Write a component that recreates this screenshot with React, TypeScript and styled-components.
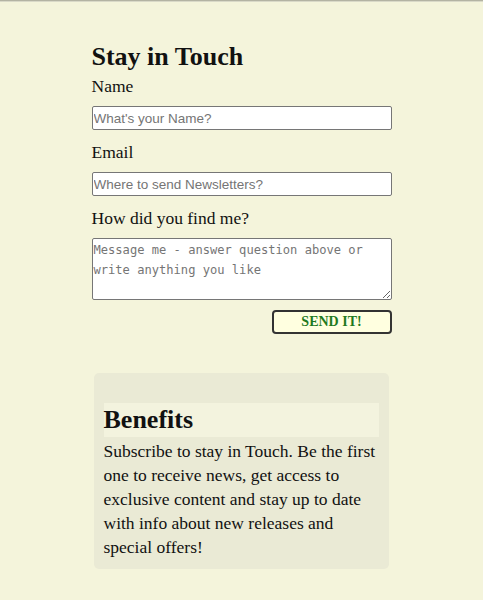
import React from "react";
import styled, { createGlobalStyle } from "styled-components";

const Global = createGlobalStyle`
  html, body { margin: 0; padding: 0; background: #f4f4db; }
  body {
    border-top: 1px solid #b3b3a3;
    box-shadow: inset 0 1px 0 #d9d9c8;
    font-family: "Liberation Serif", "DejaVu Serif", serif;
    color: #111;
    min-height: 600px;
    box-sizing: border-box;
  }
`;

const Page = styled.main`
  width: 300px;
  margin: 0 auto;
  padding-top: 38px;
  padding-bottom: 30px;
`;

const Title = styled.h1`
  margin: 0;
  font-size: 26px;
  font-weight: 700;
  line-height: 36px;
`;

const Form = styled.form`
  display: flex;
  flex-direction: column;
`;

const Label = styled.label<{ $first?: boolean }>`
  font-size: 17.5px;
  line-height: 22px;
  margin-top: ${(p) => (p.$first ? "0" : "11px")};
  margin-bottom: 9px;
`;

const Input = styled.input`
  box-sizing: border-box;
  width: 300px;
  height: 24px;
  margin: 0;
  padding: 0 1px;
  border: 1px solid #767676;
  border-radius: 2px;
  background: #fff;
  font-family: "Liberation Sans", Arial, sans-serif;
  font-size: 13.5px;
  &::placeholder { color: #757575; }
`;

const TextArea = styled.textarea`
  box-sizing: border-box;
  width: 300px;
  height: 62px;
  margin: 0;
  padding: 1px;
  border: 1px solid #767676;
  border-radius: 2px;
  background: #fff;
  font-family: "DejaVu Sans Mono", "Liberation Mono", monospace;
  font-size: 12.1px;
  line-height: 20px;
  resize: vertical;
  &::placeholder { color: #757575; }
`;

const Actions = styled.div`
  display: flex;
  justify-content: flex-end;
  margin-top: 10px;
`;

const SendButton = styled.button`
  box-sizing: border-box;
  width: 120px;
  height: 24px;
  border: 2px solid #333;
  border-radius: 4px;
  background: #ffffe0;
  color: #1f7a1f;
  font-family: "Liberation Serif", serif;
  font-weight: 700;
  font-size: 14px;
  padding: 0;
  cursor: pointer;
`;

const Benefits = styled.section`
  margin: 39px 3px 0 2px;
  padding: 30px 10px 10px;
  background: #eaead5;
  border-radius: 5px;
`;

const BenefitsTitle = styled.h2`
  margin: 0;
  background: #f3f3de;
  font-size: 26px;
  font-weight: 700;
  line-height: 34px;
`;

const BenefitsText = styled.p`
  margin: 2px 0 0;
  font-size: 17.5px;
  line-height: 24px;
`;

export default function App() {
  return (
    <>
      <Global />
      <Page>
        <Title>Stay in Touch</Title>
        <Form onSubmit={(e) => e.preventDefault()}>
          <Label $first htmlFor="name">Name</Label>
          <Input id="name" type="text" placeholder="What's your Name?" />
          <Label htmlFor="email">Email</Label>
          <Input id="email" type="email" placeholder="Where to send Newsletters?" />
          <Label htmlFor="msg">How did you find me?</Label>
          <TextArea id="msg" placeholder="Message me - answer question above or write anything you like" />
          <Actions>
            <SendButton type="submit">SEND IT!</SendButton>
          </Actions>
        </Form>
        <Benefits>
          <BenefitsTitle>Benefits</BenefitsTitle>
          <BenefitsText>
            Subscribe to stay in Touch. Be the first one to receive news, get access to exclusive content and stay up to date with info about new releases and special offers!
          </BenefitsText>
        </Benefits>
      </Page>
    </>
  );
}
